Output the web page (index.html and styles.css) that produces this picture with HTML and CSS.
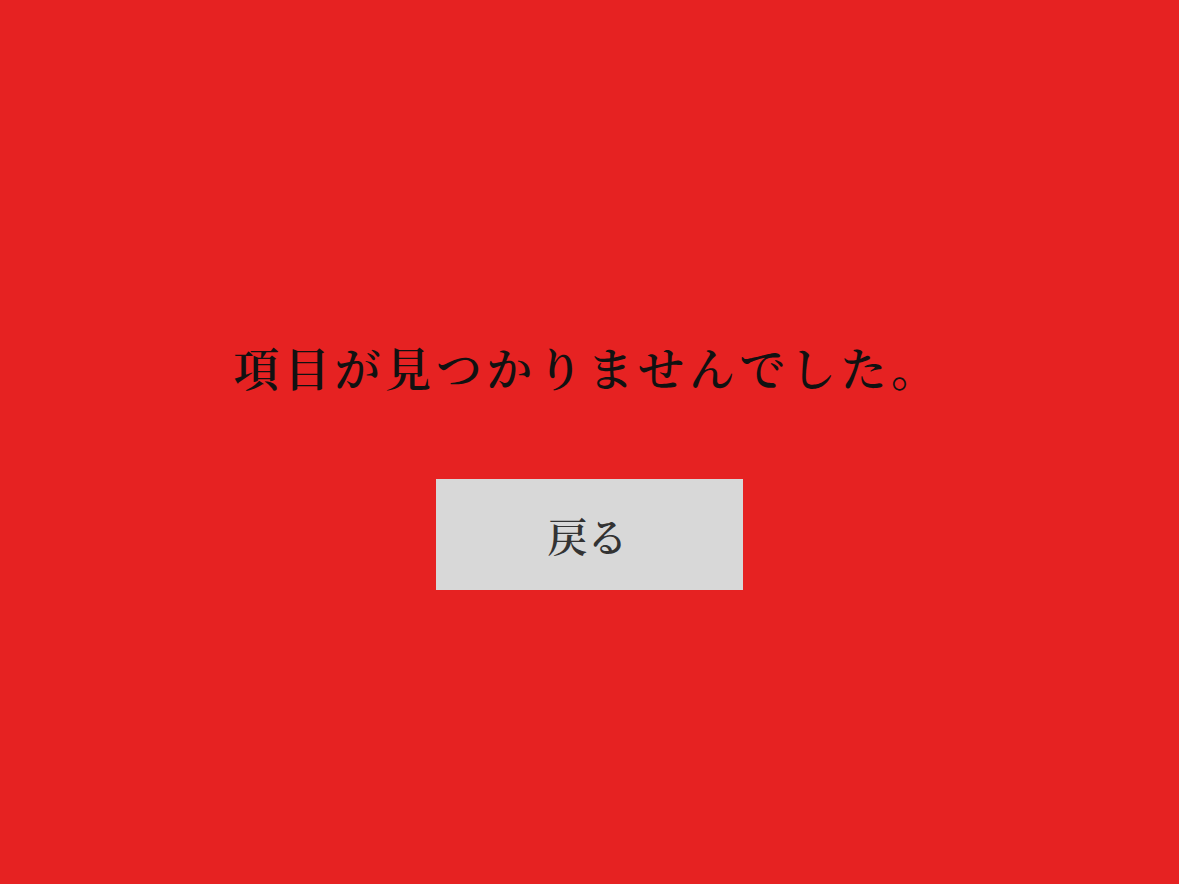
FILE: index.html
```html
<!DOCTYPE html>
<html lang="ja">
<head>
<meta charset="utf-8">
<title>項目が見つかりませんでした。</title>
<link rel="stylesheet" href="styles.css">
</head>
<body>
<main class="page">
  <h1 class="message">項目が見つかりませんでした。</h1>
  <button class="back" type="button">戻る</button>
</main>
</body>
</html>
```
FILE: styles.css
```css
html, body {
  margin: 0;
  padding: 0;
  height: 100%;
}
body {
  background: #e62222;
  font-family: "Noto Serif CJK JP", "IPAMincho", "IPAexMincho", "Noto Sans CJK JP", serif;
}
.page {
  height: 884px;
  display: flex;
  flex-direction: column;
  align-items: center;
  box-sizing: border-box;
  padding-top: 336px;
}
.message {
  margin: 0;
  font-size: 46px;
  line-height: 60px;
  font-weight: 600;
  letter-spacing: 4.6px;
  padding-right: 4px;
  color: #111;
}
.back {
  margin-top: 83px;
  width: 307px;
  height: 111px;
  border: none;
  background: #d8d8d8;
  color: #333;
  font-family: inherit;
  font-size: 40px;
  font-weight: 600;
  padding: 0 4px 0 0;
  line-height: 1;
  cursor: pointer;
}
```
